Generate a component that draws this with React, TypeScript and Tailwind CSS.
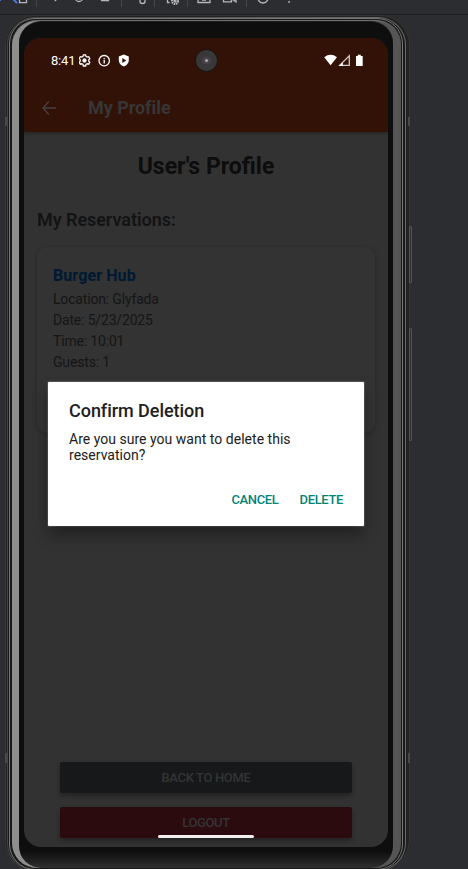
import React from "react";

function Toolbar() {
  return (
    <div className="h-[15px] shrink-0 overflow-hidden border-b border-[#1e1f22] bg-[#2b2d30]">
      <svg width="468" height="14" viewBox="0 0 468 14" fill="none" stroke="#b4b8bf" strokeWidth="1.3">
        <path d="M0 0v1M13-1l4 4" stroke="#4c7de8" strokeWidth="1.8" />
        <path d="M19.5-3v5.700h7V-3" />
        <path d="M36.500 0v7M121.500 0v7M154.500 0v7M187.500 0v7M246.500 0v7" stroke="#43454a" strokeWidth="1" />
        <path d="M53.500-2l2 2.500 2-2.500M75-3a4 4.500 0 0 0 8 0M101.500-2v2.500h7V-2" />
        <path d="M140-2v3.500q0 2 2.500 2t2.500-2V-2" />
        <path d="M167.500-2v4.500h2" />
        <circle cx="175" cy="1" r="3" strokeWidth="2" strokeDasharray="1.5 .7" />
        <circle cx="175" cy="1" r="1" />
        <path d="M198-3v5.500h12V-3M202 0h4M223.500-3v4.800h8V-3M232-1l4 3v-4" />
        <circle cx="263" cy="-2" r="5" />
        <rect x="288.300" y="1" width="1.500" height="1.800" fill="#b4b8bf" stroke="none" />
      </svg>
    </div>
  );
}

function StatusBar() {
  return (
    <div className="relative flex h-[45px] items-center pl-[27px] pr-[24px] text-white">
      <span className="w-[28px] text-[13px] leading-none tracking-[-0.2px]">8:41</span>
      <svg width="52" height="14" viewBox="0 0 52 14" fill="none" stroke="white" strokeWidth="1.300">
        <path d="M4.400.900h2.200l.400 1.500 1.200.700 1.500-.400 1.100 1.900-1 1.100v1.500l1 1.100-1.100 1.900-1.500-.400-1.200.700-.400 1.500H4.400L4 10.500l-1.200-.700-1.500.400L.200 8.300l1-1.100V5.700l-1-1.100 1.100-1.900 1.500.400L4 2.400z" />
        <circle cx="5.500" cy="6.500" r="1.500" fill="white" />
        <circle cx="25.200" cy="6.700" r="5.200" />
        <path d="M25.200 6v3.500M25.200 3.900v1.300" />
        <path d="M44.800.500l5 1.900v3.900c0 2.900-1.900 5-5 6.300-3.100-1.300-5-3.400-5-6.300V2.400z" fill="white" stroke="none" />
        <path d="M43.300 4v5l4-2.500z" fill="#321107" stroke="none" />
      </svg>
      <div className="absolute left-[171px] top-[11px] flex size-[23px] items-center justify-center rounded-full border border-[#171311] bg-[#383838]">
        <div className="flex h-[7px] w-[9px] items-center justify-center rounded-full bg-[#46434a]">
          <div className="h-[3px] w-[3px] rounded-full bg-[#aaa5b4]" />
        </div>
      </div>
      <svg className="ml-auto" width="40" height="13" viewBox="0 0 40 13" fill="white">
        <path d="M.2 3.200Q6.600-1.500 13 3.200L6.600 11.300z" />
        <path d="M25.300 1.800v9.600h-9.600z" fill="none" stroke="#d3cac7" strokeWidth="1.300" />
        <path d="M15 12l3.800-3.800V12z" />
        <path d="M32 2h1.800V.800h3V2h1.900v10H32z" />
      </svg>
    </div>
  );
}

function Screen() {
  return (
    <div className="flex h-[809px] w-[364px] flex-col overflow-hidden rounded-[17px] bg-[#323232]">
      <header className="z-10 h-[94px] shrink-0 bg-[#321107] shadow-[0_1px_4px_rgba(0,0,0,0.3)]">
        <StatusBar />
        <div className="flex h-[49px] items-center pl-[18px]">
          <svg width="14" height="14" viewBox="0 0 14 14" fill="none" stroke="#46413f" strokeWidth="1.400">
            <path d="M14 7H1M7 .600L.900 7 7 13.400" />
          </svg>
          <span className="ml-[32px] text-[18px] font-bold leading-none tracking-[-0.05px] text-[#363636]">My Profile</span>
        </div>
      </header>
      <main className="flex flex-1 flex-col px-[13px]">
        <h1 className="mt-[20px] text-center text-[23px] font-bold leading-[30px] text-[#0d0d0d]">User's Profile</h1>
        <h2 className="mt-[26px] text-[18px] font-semibold leading-6 tracking-[-0.05px] text-[#121314]">My Reservations:</h2>
        <section className="mt-[15px] h-[186px] rounded-[10px] bg-[#333333] px-4 pt-[18px] text-[14px] leading-[21px] tracking-[-0.17px] text-[#151515] shadow-[0_1px_4px_rgba(0,0,0,0.25)]">
          <h3 className="mb-[3px] text-[16px] font-bold leading-[21px] tracking-[0.100px] text-[#001933]">Burger Hub</h3>
          <p>Location: Glyfada</p>
          <p>Date: 5/23/2025</p>
          <p>Time: 10:01</p>
          <p>Guests: 1</p>
        </section>
        <div className="mt-auto flex flex-col gap-[14px] px-[23px] pb-[9px] text-center text-[13px] font-medium leading-[32px] tracking-[-0.350px] text-[#333535]">
          <button className="h-[31px] rounded-[2px] bg-[#16181a] shadow-[0_3px_5px_rgba(0,0,0,0.3)]">BACK TO HOME</button>
          <button className="h-[31px] rounded-[2px] bg-[#2c0b0f] shadow-[0_3px_5px_rgba(0,0,0,0.3)]">LOGOUT</button>
        </div>
      </main>
    </div>
  );
}

function Dialog() {
  return (
    <div role="dialog" className="absolute left-[24px] top-[344px] h-[144px] w-[316px] rounded-[1px] bg-white px-[21px] pt-[17px] text-[#202020] shadow-[0_9px_15px_rgba(0,0,0,0.35),0_0_1px_1px_rgba(255,255,255,0.18)]">
      <h2 className="text-[18px] font-medium leading-6 tracking-[-0.040px]">Confirm Deletion</h2>
      <p className="mt-[8px] text-[14px] leading-[16px] tracking-[0.020px]">Are you sure you want to delete this<br />reservation?</p>
      <div className="mt-[28px] flex justify-end gap-[21px] text-[13px] font-medium leading-[17px] tracking-[-0.350px] text-[#008577]">
        <button>CANCEL</button>
        <button>DELETE</button>
      </div>
    </div>
  );
}

function Phone() {
  return (
    <div className="relative ml-[5px] mt-0 w-[405px] shrink-0">
      <div className="h-[858px] rounded-[30px_30px_34px_32px] border border-[#353535] bg-[#222222] py-[1px] pl-[1px] pr-[3px]">
        <div className="h-full rounded-[28px] bg-linear-to-r from-[#444444] to-[#686868] p-[1px]">
          <div className="h-full rounded-[27px] bg-[#191919] pl-[1px] pr-[2px]">
            <div className="h-full rounded-[26px] border border-[#777777] bg-[#191919] py-[1px] pl-[2px] pr-[1px]">
              <div className="h-full rounded-[25px] border-t border-[#707070] bg-linear-to-r from-[#8e8e8e] from-50% to-[#555555] to-50% pl-[7px] pr-[8px]">
                <div className="h-full rounded-[22px] border-t border-[#1c1c1c] bg-linear-to-b from-[#0e0e0e] from-98% to-[#303030] px-[5px] pt-[16px]">
                  <div className="relative">
                    <Screen />
                    <Dialog />
                    <div className="absolute bottom-[9px] left-[134px] h-[3px] w-[96px] rounded-full bg-[#f5eeee]" />
                  </div>
                </div>
              </div>
            </div>
          </div>
        </div>
      </div>
      <div className="absolute left-[404px] top-[211px] h-[57px] w-[3px] rounded-r-[1px] border border-[#555555] bg-[#303030]" />
      <div className="absolute left-[404px] top-[313px] h-[113px] w-[3px] rounded-r-[1px] border border-[#555555] bg-[#303030]" />
      <div className="absolute left-[403px] top-[102px] h-[9px] w-[2px] bg-[#484848]" />
      <div className="absolute left-[403px] top-[738px] h-[10px] w-[2px] bg-[#484848]" />
      <div className="absolute left-0 top-[102px] h-[9px] w-[2px] bg-[#484848]" />
      <div className="absolute left-0 top-[738px] h-[10px] w-[2px] bg-[#484848]" />
    </div>
  );
}

export default function App() {
  return (
    <div className="flex h-[869px] w-[468px] flex-col overflow-hidden bg-[#2b2d30] font-['Roboto','Liberation_Sans',sans-serif]">
      <Toolbar />
      <Phone />
    </div>
  );
}
